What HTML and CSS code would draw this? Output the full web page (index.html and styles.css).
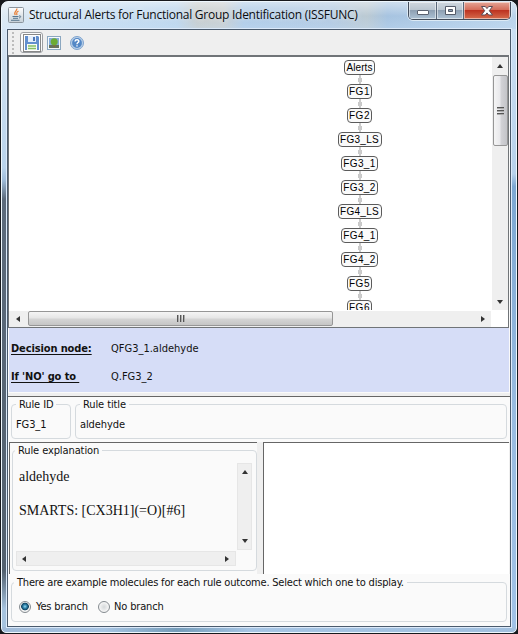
FILE: index.html
```html
<!DOCTYPE html>
<html lang="en">
<head>
<meta charset="utf-8">
<title>Structural Alerts for Functional Group Identification (ISSFUNC)</title>
<link rel="stylesheet" href="styles.css">
</head>
<body>
<div class="window">
  <header class="titlebar">
    <svg class="app-icon" width="16" height="16" viewBox="0 0 16 16">
      <defs><linearGradient id="app" x2="0" y2="1"><stop stop-color="#fff"/><stop offset="1" stop-color="#c5d0d8"/></linearGradient></defs>
      <rect x=".5" y=".5" width="15" height="15" rx="1" fill="url(#app)" stroke="#8a959e"/>
      <path d="M8.800 1.500C9.500 4 5 4.700 7.300 8M10.500 4C8 5.500 8.500 6 9 8" fill="none" stroke="#e8823a" stroke-width="1.300"/>
      <path d="M4.500 9.500h6M5 11.300h5M3 13.300h8.500M11 9c2.500-.7 2 1.800 0 2" fill="none" stroke="#58778f"/>
    </svg>
    <h1 class="title">Structural Alerts for Functional Group Identification (ISSFUNC)</h1>
    <div class="controls">
      <span class="ctl ctl-min"><svg width="14" height="12"><rect x="1.500" y="5.500" width="11" height="4" rx=".5" fill="#fff" stroke="#5c6270"/></svg></span>
      <span class="ctl ctl-max"><svg width="13" height="11"><path fill-rule="evenodd" d="M1.500 1.500h10v8h-10zM4.500 4.500v2h4v-2z" fill="#fff" stroke="#545b69"/></svg></span>
      <span class="ctl ctl-close"><svg width="14" height="12"><path d="M1.500 1.500h3.800L7 3.600l1.700-2.100h3.800L9.300 5.700l3.200 4.300H8.700L7 7.900 5.300 10H1.500l3.200-4.300z" fill="#fff" stroke="#5b4b55"/></svg></span>
    </div>
  </header>

  <main class="client">
    <div class="toolbar">
      <span class="grip"></span>
      <span class="tool tool-active"><svg width="18" height="18" viewBox="0 0 18 18">
        <rect x=".5" y=".5" width="17" height="17" fill="#fff" stroke="#111" stroke-dasharray="1 1"/>
        <path d="M2 2h13l1 1v13H2z" fill="#628fce"/><path d="M5 2h8v6H5z" fill="#e4eefb"/><path d="M10 3h2v4h-2z" fill="#4d76b5"/><path d="M4 10h10v6H4z" fill="#f8fcf4"/><path d="M5 12h8M5 14.500h8" stroke="#83c064" stroke-width="1.500"/>
      </svg></span>
      <svg class="tool-picture" width="14" height="14" viewBox="0 0 14 14">
        <rect x=".5" y=".5" width="13" height="13" fill="#f5f9fc" stroke="#8ba7c0"/><path d="M2 2h10v10H2z" fill="#86acd9"/><path d="M2 9h10v3H2z" fill="#66725f"/><path d="M6.500 8h1.500v3H6.500z" fill="#856c35"/><circle cx="7.200" cy="5.700" r="3.500" fill="#6cab35"/>
      </svg>
      <svg class="tool-help" width="14" height="14" viewBox="0 0 14 14">
        <circle cx="7" cy="7" r="6.500" fill="#b9d0e8" stroke="#7fa3cd"/><circle cx="7" cy="7" r="4.900" fill="#5488c6"/><path d="M5 5.500C5.200 3 9.200 3.300 8.800 5.500 8.600 6.600 7 6.700 7 8.300M7 9.300v1.300" fill="none" stroke="#fff" stroke-width="1.400"/>
      </svg>
    </div>

    <section class="tree-pane">
      <div class="tree-view">
        <ul class="tree">
          <li class="node">Alerts</li>
          <li class="node w3">FG1</li>
          <li class="node w3">FG2</li>
          <li class="node w6">FG3_LS</li>
          <li class="node w5">FG3_1</li>
          <li class="node w5">FG3_2</li>
          <li class="node w6">FG4_LS</li>
          <li class="node w5">FG4_1</li>
          <li class="node w5">FG4_2</li>
          <li class="node w3">FG5</li>
          <li class="node w3">FG6</li>
        </ul>
      </div>
      <div class="vbar">
        <i class="arrow up"></i>
        <div class="thumb-v"><i></i><i></i><i></i></div>
        <i class="arrow down"></i>
      </div>
      <div class="hbar">
        <i class="arrow left"></i>
        <div class="thumb-h"><i></i><i></i><i></i></div>
        <i class="arrow right"></i>
      </div>
    </section>

    <section class="decision">
      <b class="key"><span>Decision node:</span></b><span>QFG3_1.aldehyde</span>
      <b class="key"><span>If 'NO' go to&nbsp;</span></b><span>Q.FG3_2</span>
    </section>

    <section class="rule-head">
      <div class="group group-id"><span class="legend">Rule ID</span><span class="value">FG3_1</span></div>
      <div class="group group-title"><span class="legend">Rule title</span><span class="value">aldehyde</span></div>
    </section>

    <section class="rule-body">
      <div class="explain-pane">
        <div class="group explain">
          <span class="legend l-explain">Rule explanation</span>
          <div class="explain-grid">
            <div class="explain-text"><p>aldehyde</p><p class="smarts">SMARTS: [CX3H1](=O)[#6]</p></div>
            <div class="vbar small"><i class="arrow up"></i><i class="arrow down"></i></div>
            <div class="hbar small"><i class="arrow left"></i><i class="arrow right"></i></div>
          </div>
        </div>
      </div>
      <div class="molecule"></div>
    </section>

    <section class="branch">
      <div class="group group-branch">
        <span class="legend l-branch">There are example molecules for each rule outcome. Select which one to display.</span>
        <div class="radios">
          <span class="radio on"></span><span class="r-yes">Yes branch</span>
          <span class="radio"></span><span class="r-no">No branch</span>
        </div>
      </div>
    </section>
  </main>
</div>
</body>
</html>
```
FILE: styles.css
```css
* { box-sizing: border-box; }
body { margin: 0; width: 518px; height: 634px; overflow: hidden; background: #17191d; font: 11px/14px "DejaVu Sans Condensed", "DejaVu Sans", sans-serif; font-stretch: condensed; color: #111; }
p, h1, ul { margin: 0; padding: 0; font-weight: normal; list-style: none; }
svg { display: block; }
span { white-space: nowrap; }

.window {
  width: 516px; height: 632px; margin: 1px 0 0 1px; padding: 0 5px 4px;
  border: 1px solid #eef7fd; border-radius: 7px 7px 5px 5px;
  background:
    linear-gradient(90deg, #a1bbd8, #a7c4e2 20%, #769dba 34%, #a7c5e4 48%, #a2c0df) 0 100% / 100% 5px no-repeat,
    linear-gradient(#d6e5f3, #b9d3eb 22%, #9fbcd9 24%, #5c6b7c 27%, #52606e 86%, #a6c3de 92%) 0 27px / 6px 100% no-repeat,
    linear-gradient(#cbdff3, #b7d1eb 23%, #7da7d2 25%, #98bbe0 60%, #a2c3e8) 100% 27px / 6px 100% no-repeat,
    linear-gradient(rgba(255,255,255,.5), rgba(255,255,255,.1) 50%, rgba(210,230,250,.4)) 0 0 / 100% 28px no-repeat,
    linear-gradient(90deg, #d9e7f2, #c4dcf1 17%, #b6d2eb 34%, #c1c7c7 38%, #c4c9ca 43%, #a7c6e5 47%, #a9c3dd 64%, #b4c4ce 71%, #9dbddd 75%, #b3cfe9);
}
.titlebar { height: 27px; display: flex; align-items: flex-start; }
.app-icon { margin: 5px 0 0 1px; }
.title { margin: 4px 0 0 5px; width: 329px; white-space: nowrap; font: 12px/17px "Open Sans", "Noto Sans", sans-serif; letter-spacing: -.255px; color: #0b0d10; text-shadow: 0 0 5px rgba(255,255,255,.8); }
.controls { margin: 0 0 0 auto; display: flex; width: 103px; height: 18px; border: 1px solid #434d5c; border-top: 0; border-radius: 0 0 5px 5px; overflow: hidden; box-shadow: 0 0 0 1px #dceaf5; }
.ctl { display: flex; align-items: center; justify-content: center; border-right: 1px solid #596779; box-shadow: inset 0 0 0 1px rgba(255,255,255,.5); background: linear-gradient(#d0d8df, #b8c4cf 48%, #8ea0b3 50%, #adc2d5); }
.ctl-min { width: 28px; }
.ctl-max { width: 27px; }
.ctl-close { flex: 1; border: 0; background: linear-gradient(#e5a697, #d46b58 47%, #bd3321 50%, #d66c4c); }

.client { height: 598px; border: 1px solid #4a5a6c; background: #fafafa; box-shadow: 0 0 0 1px #dceafa; }
.toolbar { height: 25px; display: flex; align-items: center; background: #efefef; }
.grip { width: 2px; height: 22px; margin-left: 4px; background: repeating-linear-gradient(#bcbcbc 0 2px, transparent 2px 4px); }
.tool { width: 23px; height: 21px; margin-left: 6px; display: flex; align-items: center; justify-content: center; }
.tool-active { border: 1px solid #9c9fa3; border-radius: 3px; background: #fcfcfc; }
.tool-picture { margin-left: 4px; }
.tool-help { margin-left: 9px; }

.tree-pane { width: 501px; height: 273px; display: grid; grid-template: 254px 16px / 483px 16px; border: 1px solid #707478; border-top-width: 2px; background: #fff; }
.tree-view { overflow: hidden; height: 253px; }
.tree { margin: 3px 0 0 217px; width: 267px; display: flex; flex-direction: column; align-items: center; gap: 9px; }
.node { position: relative; flex: none; width: 31px; height: 15px; border: 1px solid #5b5b5b; border-radius: 4px; background: #fafafa; font: 10px/14px "Liberation Sans", sans-serif; font-stretch: normal; text-align: center; white-space: nowrap; letter-spacing: .1px; color: #000; }
.w3 { width: 25px; letter-spacing: .5px; }
.w5 { width: 37px; letter-spacing: .4px; }
.w6 { width: 44px; letter-spacing: .3px; }
.node + .node::before { content: ""; position: absolute; left: 50%; top: -10px; width: 4px; height: 9px; margin-left: -2px; background: linear-gradient(90deg, transparent 1px, #ccc 1px 3px, transparent 3px), linear-gradient(transparent 3px, #c8c8c8 3px 7px, transparent 7px); }

.vbar { display: flex; flex-direction: column; align-items: center; background: #efefef; height: 253px; }
.hbar { display: flex; align-items: center; background: #efefef; width: 482px; }
.arrow { flex: none; border: 3px solid transparent; width: 0; height: 0; }
.up { border-bottom-color: #333; border-top: 0; border-bottom-width: 4px; }
.down { border-top-color: #333; border-bottom: 0; border-top-width: 4px; margin-top: auto; }
.left { border-right-color: #333; border-left: 0; border-right-width: 4px; }
.right { border-left-color: #333; border-right: 0; border-left-width: 4px; margin-left: auto; }
.vbar .up { margin-top: 7px; }
.vbar .down { margin-bottom: 6px; }
.hbar .left { margin-left: 7px; }
.hbar .right { margin-right: 6px; }
.thumb-v, .thumb-h { display: flex; align-items: center; justify-content: center; gap: 1px; border: 1px solid #969696; border-radius: 2px; }
.thumb-v { flex-direction: column; width: 15px; height: 71px; margin-top: 7px; background: linear-gradient(90deg, #f5f5f5, #e8e8eb 48%, #d3d3d7 52%, #c3c4c8); }
.thumb-h { width: 305px; height: 15px; margin-left: 8px; align-self: flex-start; background: linear-gradient(#f5f5f5, #e5e5e5 48%, #d5d5d5 52%, #c5c5c5); }
.thumb-v i { width: 7px; height: 2px; border-top: 1px solid #555; border-bottom: 1px solid #aaa; }
.thumb-h i { width: 2px; height: 7px; border-left: 1px solid #555; border-right: 1px solid #aaa; }

.decision { width: 500px; height: 64px; margin-left: 1px; padding: 7px 0 0 2px; display: grid; grid-template: 28px 28px / 100px 1fr; align-items: center; background: #d6ddf7; }
.key { font-weight: bold; letter-spacing: -.12px; }
.key span { text-decoration: underline; text-underline-offset: 2px; }

.rule-head { height: 46px; margin-top: 4px; border-top: 1px solid #666; padding: 7px 3px 0; display: flex; gap: 4px; box-shadow: 0 -3px #efefef; }
.group { border: 1px solid #d5dade; border-radius: 4px; display: flex; flex-direction: column; align-items: flex-start; }
.legend { margin: -7px 0 0 4px; padding: 0 3px; background: #fafafa; line-height: 14px; height: 14px; letter-spacing: -.1px; }
.value { margin: 6px 0 0 4px; letter-spacing: -.1px; }
.group-id { width: 60px; height: 35px; }
.group-title { width: 432px; height: 35px; }

.rule-body { height: 132px; display: flex; gap: 6px; margin-left: 1px; background: #efefef; width: 501px; }
.explain-pane { width: 248px; border: 1px solid #666; border-right: 0; border-bottom: 0; padding: 7px 0 0 2px; background: #fafafa; }
.explain { width: 245px; height: 121px; }
.l-explain { margin-left: 2px; }
.molecule { width: 246px; border: 1px solid #666; border-right: 0; border-bottom: 0; background: #fff; }
.explain-grid { display: grid; grid-template: 87px 15px / 220px 15px; gap: 1px; margin: 5px 0 0 3px; }
.explain-text { padding: 5px 0 0 3px; font: 14px/17px "Liberation Serif", serif; white-space: nowrap; }
.smarts { margin-top: 17px; }
.small { width: auto; height: auto; border: 1px solid #e6e6e6; }
.vbar.small .up, .vbar.small .down { margin-block: 6px; }
.vbar.small .down { margin-top: auto; }
.hbar.small .left { margin-left: 5px; }

.branch { padding: 8px 0 0 3px; }
.group-branch { width: 496px; height: 40px; }
.l-branch { margin-left: 2px; letter-spacing: -.2px; }
.radios { display: flex; align-items: center; height: 14px; margin: 10px 0 0 7px; letter-spacing: -.15px; }
.radio { width: 12px; height: 12px; border: 1px solid #858b90; border-radius: 50%; background: radial-gradient(circle, #d5d8da, #f7f7f7 70%); }
.radio.on { background: radial-gradient(circle at 50% 45%, #8ed9f2 0, #2b7da5 2px, #12435f 3.500px, #f4f4f4 4.200px); }
.r-yes { margin-left: 5px; width: 62px; }
.r-no { margin-left: 4px; }
```
